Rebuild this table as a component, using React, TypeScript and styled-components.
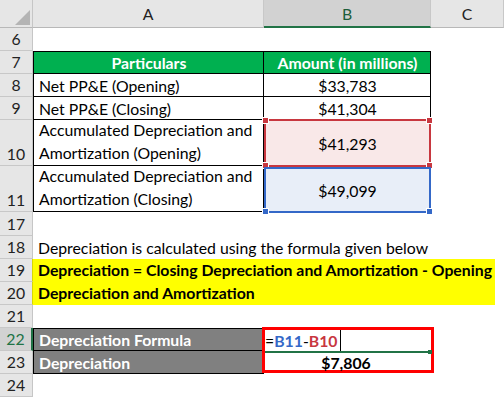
import React from "react";
import styled, { createGlobalStyle, css } from "styled-components";

const GlobalStyle = createGlobalStyle`
  body {
    margin: 0;
    background: #ffffff;
    font-family: "Lato", "Liberation Sans", sans-serif;
  }
`;

const Sheet = styled.div`
  display: grid;
  grid-template-columns: 33px 231px 167px 73px;
  grid-template-rows: 28px 23px 23px 23px 23px 46px 46px 24px 23px 23px 23px 23px 23px 23px 23px;
  width: 504px;
  height: 397px;
  overflow: hidden;
  font-size: 15.8px;
  color: #000;
`;

const Corner = styled.div`
  position: relative;
  background: #e6e6e6;
  border-right: 1px solid #c6c6c6;
  border-bottom: 1px solid #b8b8b8;
  box-sizing: border-box;
  &::after {
    content: "";
    position: absolute;
    left: 15px;
    top: 10px;
    width: 15px;
    height: 15px;
    background: #b4b4b4;
    clip-path: polygon(100% 0, 100% 100%, 0 100%);
  }
`;

const ColHead = styled.div<{ $active?: boolean }>`
  display: flex;
  align-items: center;
  justify-content: center;
  box-sizing: border-box;
  background: ${(p) => (p.$active ? "#d2d2d2" : "#e6e6e6")};
  border-right: 1px solid #c8c8c8;
  border-bottom: ${(p) => (p.$active ? "2px solid #217346" : "1px solid #b8b8b8")};
  color: ${(p) => (p.$active ? "#1d5e3a" : "#222")};
  padding-top: ${(p) => (p.$active ? "1px" : "0")};
`;

const RowNum = styled.div<{ $active?: boolean; $yellow?: boolean }>`
  display: flex;
  align-items: flex-end;
  justify-content: center;
  box-sizing: border-box;
  padding-bottom: 2px;
  background: ${(p) => (p.$active ? "#d2d2d2" : "#e6e6e6")};
  border-bottom: 1px solid #c8c8c8;
  border-right: ${(p) =>
    p.$active ? "2px solid #217346" : p.$yellow ? "1px solid #d8d800" : "1px solid #c6c6c6"};
  color: ${(p) => (p.$active ? "#217346" : "#222")};
  grid-column: 1;
`;

const Blank = styled.div<{ $span?: number }>`
  grid-column: ${(p) => `span ${p.$span ?? 3}`};
`;

const Cell = styled.div<{
  $top?: boolean;
  $left?: boolean;
  $center?: boolean;
  $bold?: boolean;
  $fill?: string;
  $ink?: string;
}>`
  display: flex;
  align-items: center;
  justify-content: ${(p) => (p.$center ? "center" : "flex-start")};
  box-sizing: border-box;
  padding: 0 4px 0 5px;
  line-height: 23px;
  background: ${(p) => p.$fill ?? "#fff"};
  color: ${(p) => p.$ink ?? "#000"};
  font-weight: ${(p) => (p.$bold ? 700 : 400)};
  border-right: 1px solid #000;
  border-bottom: 1px solid #000;
  ${(p) => p.$top && css`border-top: 1px solid #000;`}
  ${(p) => p.$left && css`border-left: 1px solid #000;`}
  white-space: nowrap;
`;

const WrapCell = styled(Cell)`
  white-space: normal;
  align-items: flex-end;
  padding-bottom: 1px;
`;

const Selected = styled.div<{ $tone: "red" | "blue" }>`
  position: relative;
  display: flex;
  align-items: center;
  justify-content: center;
  box-sizing: border-box;
  border: 2px solid ${(p) => (p.$tone === "red" ? "#c8373f" : "#3468c8")};
  background: ${(p) => (p.$tone === "red" ? "#f9e8e8" : "#e8eef8")};
  margin-top: ${(p) => (p.$tone === "red" ? "-1px" : "1px")};
  margin-bottom: -1px;
`;

const Handle = styled.span<{ $tone: "red" | "blue"; $x: "l" | "r"; $y: "t" | "b" }>`
  position: absolute;
  width: 5px;
  height: 5px;
  background: ${(p) => (p.$tone === "red" ? "#c8373f" : "#3468c8")};
  border: 1px solid #fff;
  ${(p) => (p.$x === "l" ? "left: -4px;" : "right: -4px;")}
  ${(p) => (p.$y === "t" ? "top: -4px;" : "bottom: -4px;")}
`;

const Note = styled.div`
  grid-column: span 3;
  display: flex;
  align-items: center;
  padding-left: 5px;
  white-space: nowrap;
`;

const Highlight = styled.div`
  grid-column: span 3;
  grid-row: span 2;
  margin-right: 9px;
  background: #ffff00;
  font-weight: 700;
  line-height: 22.5px;
  padding: 0 0 0 5px;
  white-space: nowrap;
`;

const FormulaBox = styled.div`
  position: relative;
  z-index: 1;
  grid-column: 3;
  grid-row: span 2;
  margin: -1px -3px 1px -2px;
  border: 3px solid #ff0000;
  display: flex;
  flex-direction: column;
  background: #fff;
`;

const FormulaLine = styled.div`
  position: relative;
  flex: 1;
  display: flex;
  align-items: center;
  border-bottom: 2px solid #217346;
  margin-right: 2px;
  &::after {
    content: "";
    position: absolute;
    right: -3px;
    bottom: -3px;
    width: 4px;
    height: 4px;
    background: #217346;
  }
`;

const Ref = styled.span<{ $tone: "red" | "blue" }>`
  font-weight: 700;
  color: ${(p) => (p.$tone === "red" ? "#c8373f" : "#3468c8")};
`;

const Caret = styled.span`
  display: inline-block;
  width: 1px;
  height: 21px;
  background: #000;
  margin-left: 2px;
`;

const ResultLine = styled.div`
  flex: 1;
  display: flex;
  align-items: center;
  justify-content: center;
  font-weight: 700;
  padding-right: 4px;
`;

const GRAY = "#808080";
const GREEN = "#00b050";

export default function App() {
  return (
    <>
      <GlobalStyle />
      <Sheet>
        <Corner />
        <ColHead>A</ColHead>
        <ColHead $active>B</ColHead>
        <ColHead>C</ColHead>

        <RowNum>6</RowNum>
        <Blank />

        <RowNum>7</RowNum>
        <Cell $top $left $center $bold $fill={GREEN} $ink="#fff">Particulars</Cell>
        <Cell $top $center $bold $fill={GREEN} $ink="#fff">Amount (in millions)</Cell>
        <Blank $span={1} />

        <RowNum>8</RowNum>
        <Cell $left>Net PP&amp;E (Opening)</Cell>
        <Cell $center>$33,783</Cell>
        <Blank $span={1} />

        <RowNum>9</RowNum>
        <Cell $left>Net PP&amp;E (Closing)</Cell>
        <Cell $center>$41,304</Cell>
        <Blank $span={1} />

        <RowNum>10</RowNum>
        <WrapCell $left>Accumulated Depreciation and Amortization (Opening)</WrapCell>
        <Selected $tone="red">
          $41,293
          <Handle $tone="red" $x="l" $y="t" />
          <Handle $tone="red" $x="r" $y="t" />
          <Handle $tone="red" $x="l" $y="b" />
          <Handle $tone="red" $x="r" $y="b" />
        </Selected>
        <Blank $span={1} />

        <RowNum>11</RowNum>
        <WrapCell $left>Accumulated Depreciation and Amortization (Closing)</WrapCell>
        <Selected $tone="blue">
          $49,099
          <Handle $tone="blue" $x="l" $y="b" />
          <Handle $tone="blue" $x="r" $y="b" />
        </Selected>
        <Blank $span={1} />

        <RowNum>17</RowNum>
        <Blank />

        <RowNum>18</RowNum>
        <Note>Depreciation is calculated using the formula given below</Note>

        <RowNum $yellow>19</RowNum>
        <Highlight>
          Depreciation = Closing Depreciation and Amortization - Opening
          <br />
          Depreciation and Amortization
        </Highlight>
        <RowNum $yellow>20</RowNum>

        <RowNum>21</RowNum>
        <Blank />

        <RowNum $active>22</RowNum>
        <Cell $top $left $bold $fill={GRAY} $ink="#fff">Depreciation Formula</Cell>
        <FormulaBox>
          <FormulaLine>
            =<Ref $tone="blue">B11</Ref>-<Ref $tone="red">B10</Ref>
            <Caret />
          </FormulaLine>
          <ResultLine>$7,806</ResultLine>
        </FormulaBox>
        <Blank $span={1} />

        <RowNum>23</RowNum>
        <Cell $left $bold $fill={GRAY} $ink="#fff">Depreciation</Cell>
        <Blank $span={1} />

        <RowNum>24</RowNum>
        <Blank />
      </Sheet>
    </>
  );
}
